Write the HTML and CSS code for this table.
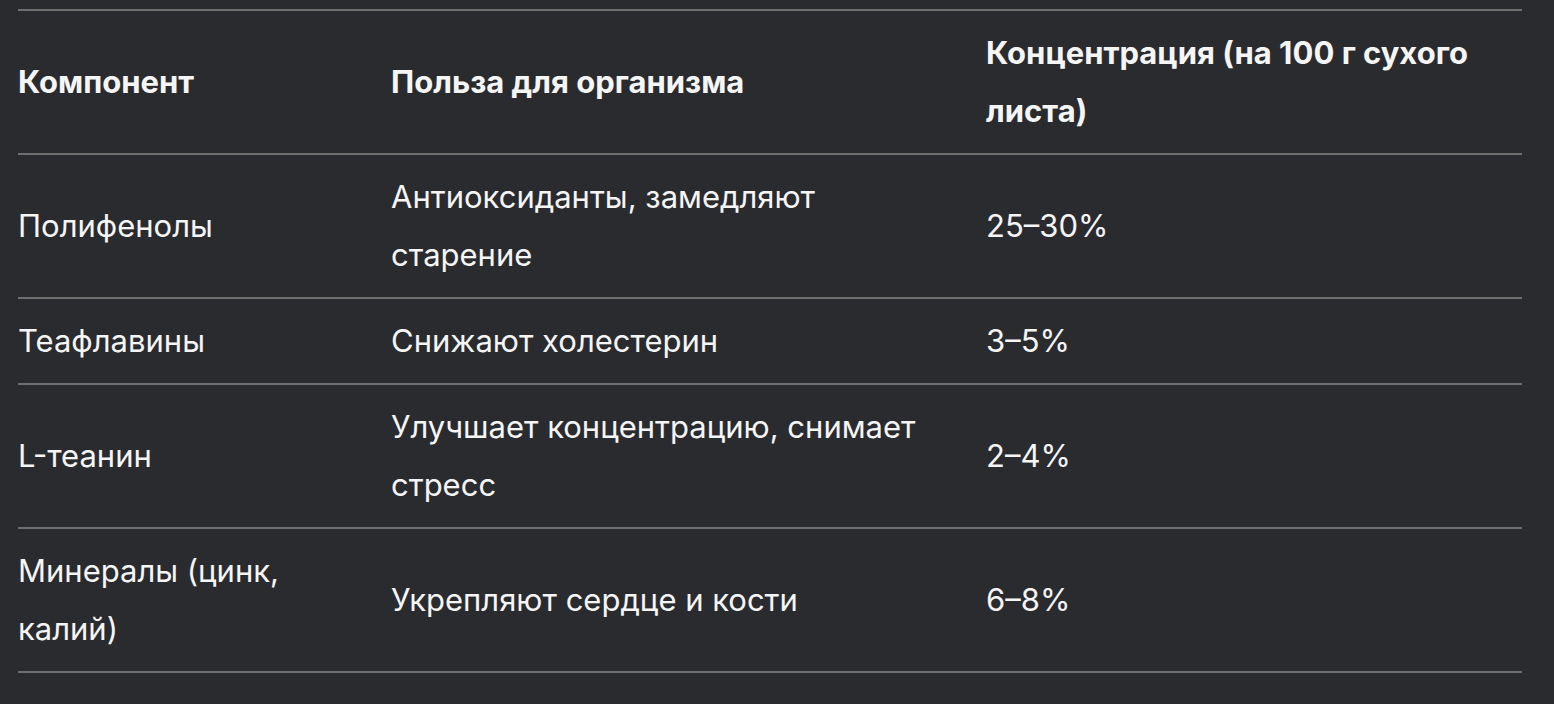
FILE: index.html
```html
<!DOCTYPE html>
<html>
<head>
    <link rel="stylesheet" href="styles.css">
    <title>Состав чайного листа</title>
</head>
<body>
    <div class="table-wrap">
        <table class="tea-table">
            <colgroup>
                <col class="col-name">
                <col class="col-benefit">
                <col class="col-amount">
            </colgroup>
            <thead>
                <tr>
                    <th>Компонент</th>
                    <th>Польза для организма</th>
                    <th>Концентрация (на 100 г сухого листа)</th>
                </tr>
            </thead>
            <tbody>
                <tr>
                    <td>Полифенолы</td>
                    <td>Антиоксиданты, замедляют старение</td>
                    <td>25–30%</td>
                </tr>
                <tr>
                    <td>Теафлавины</td>
                    <td>Снижают холестерин</td>
                    <td>3–5%</td>
                </tr>
                <tr>
                    <td>L-теанин</td>
                    <td>Улучшает концентрацию, снимает стресс</td>
                    <td>2–4%</td>
                </tr>
                <tr>
                    <td>Минералы (цинк, калий)</td>
                    <td>Укрепляют сердце и кости</td>
                    <td>6–8%</td>
                </tr>
            </tbody>
        </table>
    </div>
</body>
</html>
```

FILE: styles.css
```css
* {
    box-sizing: border-box;
}

body {
    margin: 0;
    padding: 0;
    background-color: #2a2b2f;
    color: #f5f5f5;
    font-family: Inter, "Noto Sans", sans-serif;
}

.table-wrap {
    padding: 9px 32px 0 18px;
}

.tea-table {
    width: 1504px;
    border-collapse: collapse;
    table-layout: fixed;
    font-size: 31px;
    line-height: 58px;
}

.col-name {
    width: 373px;
}

.col-benefit {
    width: 595px;
}

.col-amount {
    width: 536px;
}

.tea-table thead tr {
    border-top: 2px solid #6e6e6e;
}

.tea-table tr {
    border-bottom: 2px solid #6e6e6e;
}

.tea-table th,
.tea-table td {
    padding: 13px 40px 13px 0;
    text-align: left;
    vertical-align: middle;
}

.tea-table th {
    font-weight: 700;
}

.tea-table td {
    font-weight: 400;
}
```
